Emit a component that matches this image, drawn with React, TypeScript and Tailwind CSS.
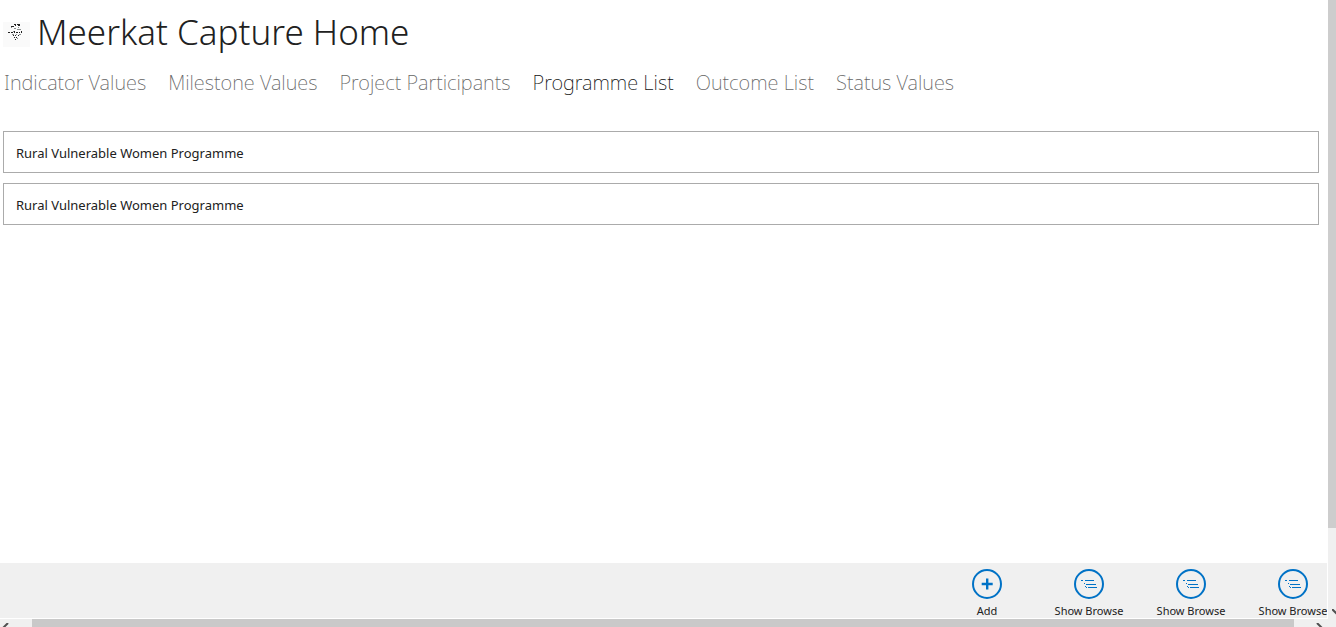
import { useState } from "react";

const tabs = [
  "Indicator Values",
  "Milestone Values",
  "Project Participants",
  "Programme List",
  "Outcome List",
  "Status Values",
];

const programmes = ["Rural Vulnerable Women Programme", "Rural Vulnerable Women Programme"];

const commands = [
  { label: "Add", icon: "add" },
  { label: "Show Browse", icon: "list" },
  { label: "Show Browse", icon: "list" },
  { label: "Show Browse", icon: "list" },
];

function Logo() {
  return (
    <svg viewBox="0 0 27 25" className="h-[25px] w-[27px] shrink-0 bg-[#fafafa]" shapeRendering="crispEdges" aria-hidden="true">
      <g fill="#222">
        <path d="M11 2h2v1h-2zM14 2h3v2h-2v-1h-1zM8 4h3v1H8zM12 3h1v1h-1zM5 10h2v1H5zM8 10h2v1H8zM11 9h1v2h-1zM13 10h2v1h-2zM16 10h1v1h-1zM18 9h1v2h-1z" />
        <path d="M10 13h1v1h-1zM12 13h1v1h-1zM15 13h1v1h-1zM11 15h1v1h-1zM13 15h1v1h-1zM12 17h1v1h-1z" />
      </g>
      <g fill="#8a8f8f">
        <path d="M8 5h1v1H8zM11 6h2v1h-2zM15 5h1v1h-1zM14 7h3v1h-3zM9 12h2v1H9zM13 12h1v1h-1zM16 12h2v1h-2zM10 9h1v1h-1zM17 7h1v1h-1zM14 16h1v1h-1z" />
      </g>
    </svg>
  );
}

function CommandIcon({ name }: { name: string }) {
  return (
    <svg viewBox="0 0 30 30" className="size-[30px] shrink-0" fill="none" stroke="#0072c6" aria-hidden="true">
      <circle cx="15" cy="15" r="14" strokeWidth="2" />
      {name === "add" ? (
        <path d="M15.2 9.5v11M9.7 15h11" strokeWidth="2.4" />
      ) : (
        <path
          shapeRendering="crispEdges"
          d="M7 11.5h2M11 11.5h9M10 14.5h1M12 15.5h10M11 17.5h1M12 18.5h1M14 18.5h9"
        />
      )}
    </svg>
  );
}

function Arrow({ d, className }: { d: string; className: string }) {
  return (
    <svg viewBox="0 0 10 10" className={className} fill="none" stroke="#505050" strokeWidth="2" aria-hidden="true">
      <path d={d} />
    </svg>
  );
}

export default function App() {
  const [active, setActive] = useState("Programme List");
  return (
    <div className="flex h-screen overflow-hidden bg-white font-['Noto_Sans','Open_Sans',sans-serif] text-[#212121]">
      <div className="flex min-w-0 flex-1 flex-col">
        <main className="flex-1 overflow-hidden pr-[9px] pl-[3px]">
          <header className="flex gap-[7px]">
            <div className="flex h-16 items-center pt-1">
              <Logo />
            </div>
            <h1 className="text-[35px] leading-16 font-[350] whitespace-nowrap">Meerkat Capture Home</h1>
          </header>
          <nav className="flex h-[38px] items-center gap-[22px] pl-px">
            {tabs.map((tab) => (
              <button
                key={tab}
                type="button"
                onClick={() => setActive(tab)}
                className={`text-[20px] leading-9 font-extralight whitespace-nowrap ${active === tab ? "text-[#111111]" : "text-[#666666]"}`}
              >
                {tab}
              </button>
            ))}
          </nav>
          <ul className="mt-[29px] flex flex-col gap-[10px]">
            {programmes.map((name, i) => (
              <li key={i} className="flex h-[42px] items-center border border-[#ababab] px-3 pt-1 text-[13px]">
                {name}
              </li>
            ))}
          </ul>
        </main>
        <footer className="mr-px flex h-[55px] shrink-0 justify-end overflow-hidden bg-[#f0f0f0] pt-[6px]">
          <div className="-mr-[17px] flex">
            {commands.map((c, i) => (
              <button key={i} type="button" className="flex w-[102px] shrink-0 flex-col items-center gap-1 text-[11px] leading-4 whitespace-nowrap">
                <CommandIcon name={c.icon} />
                {c.label}
              </button>
            ))}
          </div>
        </footer>
        <div className="mt-px flex h-2 shrink-0 overflow-hidden bg-[#f0f0f0]">
          <div className="w-8 shrink-0">
            <Arrow className="mt-1 size-[10px]" d="M8 0 3 5" />
          </div>
          <div className="flex-1 bg-[#c9c9c9]" />
          <div className="flex w-[34px] shrink-0 justify-end pr-0.5">
            <Arrow className="mt-1 size-[10px]" d="M1 0 6 5" />
          </div>
        </div>
      </div>
      <div className="flex w-2 shrink-0 flex-col overflow-hidden bg-[#f0f0f0]">
        <div className="flex-1 bg-[#cdcdcd]" />
        <div className="flex h-[99px] flex-col justify-end pb-2">
          <Arrow className="ml-1 size-[10px]" d="M0 0 5 5" />
        </div>
      </div>
    </div>
  );
}
